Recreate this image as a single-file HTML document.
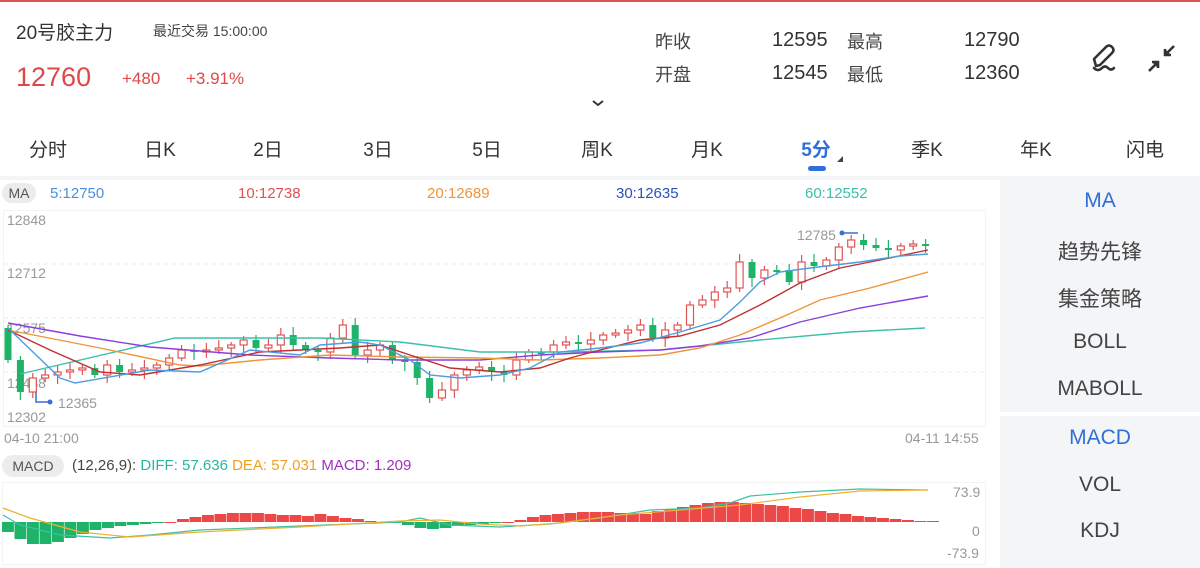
<!DOCTYPE html>
<html><head><meta charset="utf-8">
<style>
*{margin:0;padding:0;box-sizing:border-box}
body{width:1200px;height:568px;overflow:hidden;background:#fff;font-family:"Liberation Sans","Noto Sans CJK SC",sans-serif;position:relative;color:#333}
.a{position:absolute;white-space:nowrap}
.tab{position:absolute;top:135px;font-size:19px;color:#333;transform:translateX(-50%)}
.rp{position:absolute;left:1000px;width:200px;background:#f4f5f7}
.ri{position:absolute;width:200px;text-align:center;font-size:21px;color:#444;left:0}
</style></head><body>
<div class="a" style="left:0;top:0;width:1200px;height:2px;background:#d9534f"></div>
<div class="a" style="left:16px;top:18px;font-size:19px;color:#333">20号胶主力</div>
<div class="a" style="left:153px;top:21px;font-size:14px;color:#444">最近交易 15:00:00</div>
<div class="a" style="left:16px;top:62px;font-size:27px;color:#e04848">12760</div>
<div class="a" style="left:122px;top:69px;font-size:17px;color:#e04848">+480</div>
<div class="a" style="left:186px;top:69px;font-size:17px;color:#e04848">+3.91%</div>

<div class="a" style="left:655px;top:28px;font-size:18px;color:#444">昨收</div>
<div class="a" style="left:772px;top:29px;font-size:20px;color:#333">12595</div>
<div class="a" style="left:847px;top:28px;font-size:18px;color:#444">最高</div>
<div class="a" style="left:964px;top:29px;font-size:20px;color:#333">12790</div>
<div class="a" style="left:655px;top:61px;font-size:18px;color:#444">开盘</div>
<div class="a" style="left:772px;top:62px;font-size:20px;color:#333">12545</div>
<div class="a" style="left:847px;top:61px;font-size:18px;color:#444">最低</div>
<div class="a" style="left:964px;top:62px;font-size:20px;color:#333">12360</div>
<svg class="a" style="left:590px;top:98px" width="16" height="10"><path d="M3 3 L8 7 L13 3" stroke="#333" stroke-width="2" fill="none"/></svg>
<svg class="a" style="left:1088px;top:40px" width="36" height="36"><path d="M8 26 L6 19 L18 7 Q21 4 24 7 Q27 10 24 13 L12 25 Z M6 28 Q10 32 14 28 Q17 25 20 28 Q23 31 26 28" stroke="#333" stroke-width="2.6" fill="none" stroke-linejoin="round" stroke-linecap="round"/></svg>
<svg class="a" style="left:1144px;top:40px" width="36" height="36"><path d="M30 6 L21 15 M21 9 V15 H27 M5 31 L14 22 M8 22 H14 V28" stroke="#333" stroke-width="2.6" fill="none"/><path d="M21 9 L21 15 L27 15 Z M8 22 L14 22 L14 28 Z" fill="#333"/></svg>

<div class="tab" style="left:48px">分时</div>
<div class="tab" style="left:160px">日K</div>
<div class="tab" style="left:268px">2日</div>
<div class="tab" style="left:378px">3日</div>
<div class="tab" style="left:487px">5日</div>
<div class="tab" style="left:597px">周K</div>
<div class="tab" style="left:707px">月K</div>
<div class="tab" style="left:816px;color:#2f6fd8;font-weight:bold">5分</div>
<svg class="a" style="left:836px;top:155px" width="8" height="8"><path d="M7 1 L7 7 L1 7Z" fill="#444"/></svg>
<div class="a" style="left:808px;top:166px;width:18px;height:5px;border-radius:3px;background:#2f6fd8"></div>
<div class="tab" style="left:927px">季K</div>
<div class="tab" style="left:1036px">年K</div>
<div class="tab" style="left:1145px">闪电</div>
<div class="a" style="left:0;top:176px;width:1200px;height:4px;background:#f4f5f7"></div>

<div class="rp" style="top:180px;height:232px"></div>
<div class="rp" style="top:416px;height:152px"></div>
<div class="ri" style="left:1000px;top:189px;color:#2f6fd8">MA</div>
<div class="ri" style="left:1000px;top:236px">趋势先锋</div>
<div class="ri" style="left:1000px;top:283px">集金策略</div>
<div class="ri" style="left:1000px;top:330px">BOLL</div>
<div class="ri" style="left:1000px;top:377px">MABOLL</div>
<div class="ri" style="left:1000px;top:426px;color:#2f6fd8">MACD</div>
<div class="ri" style="left:1000px;top:473px">VOL</div>
<div class="ri" style="left:1000px;top:519px">KDJ</div>

<div class="a" style="left:2px;top:183px;width:34px;height:20px;border-radius:10px;background:#ececec;font-size:14px;color:#555;text-align:center;line-height:20px">MA</div>
<div class="a" style="left:50px;top:185px;font-size:15px;color:#4a8fdc">5:12750</div>
<div class="a" style="left:238px;top:185px;font-size:15px;color:#e05050">10:12738</div>
<div class="a" style="left:427px;top:185px;font-size:15px;color:#f0943a">20:12689</div>
<div class="a" style="left:616px;top:185px;font-size:15px;color:#2a52be">30:12635</div>
<div class="a" style="left:805px;top:185px;font-size:15px;color:#3cc0a8">60:12552</div>

<svg class="a" style="left:0;top:0" width="1000" height="568" id="ch">
<rect x="3.5" y="210.5" width="982" height="216" fill="none" stroke="#f3f3f3"/>
<g stroke="#eee" stroke-dasharray="4 4"><line x1="4" y1="264" x2="985" y2="264"/><line x1="4" y1="318" x2="985" y2="318"/><line x1="4" y1="372" x2="985" y2="372"/></g>
<g font-size="14" fill="#999" font-family="Liberation Sans,sans-serif">
<text x="7" y="225">12848</text><text x="7" y="278">12712</text><text x="7" y="333">12575</text><text x="7" y="388">12438</text><text x="7" y="422">12302</text>
<text x="4" y="443">04-10 21:00</text><text x="905" y="443">04-11 14:55</text>
<text x="797" y="240">12785</text><text x="58" y="408">12365</text>
<text x="953" y="497">73.9</text><text x="972" y="536">0</text><text x="947" y="558">-73.9</text>
</g>
<path d="M843 233 H858 M36 390 V402 H50" stroke="#3a6fd0" stroke-width="1.5" fill="none"/>
<circle cx="842" cy="233" r="2.5" fill="#3a6fd0"/><circle cx="50" cy="402" r="2.5" fill="#3a6fd0"/>
<g id="cd"></g>
<g fill="none" stroke-width="1.4">
<polyline stroke="#3cc0a8" points="20,374 175,338 320,338 400,342 480,352 560,352 660,350 760,340 850,332 925,328"/>
<polyline stroke="#8a3fe0" points="8,323 80,336 150,347 250,355 330,358 400,360 480,360 540,355 600,352 660,350 700,346 750,338 800,322 860,308 928,296"/>
<polyline stroke="#f0943a" points="8,330 100,348 180,365 200,366 260,360 330,355 400,357 480,358 540,360 600,358 660,355 700,348 740,335 780,318 820,300 870,288 928,272"/>
<polyline stroke="#c03030" points="8,330 50,350 100,372 140,375 200,365 260,352 300,350 340,348 380,345 410,355 450,368 500,372 540,368 570,358 600,350 640,340 680,336 720,325 760,305 800,283 840,268 880,260 928,250"/>
<polyline stroke="#4a9ee0" points="8,328 60,378 75,383 150,370 200,372 250,350 300,355 320,345 360,342 380,345 410,360 430,375 460,378 500,375 530,368 560,352 600,348 640,343 680,332 720,320 740,302 760,282 780,272 810,268 860,262 900,256 928,254"/>
</g>
<rect x="2.5" y="482.5" width="983" height="82" fill="none" stroke="#f3f3f3"/>
<g id="mh"></g>
<g fill="none" stroke-width="1.2">
<polyline stroke="#3cc0a8" points="3,515 20,525 60,535 110,538 150,535 200,530 300,526 400,522 420,518 450,525 500,527 550,524 600,518 650,510 700,508 730,503 750,496 800,492 860,489 928,490"/>
<polyline stroke="#f0b030" points="3,508 30,518 80,532 130,537 200,532 300,527 400,521 440,520 480,524 520,526 560,523 620,515 680,510 740,505 800,497 860,491 928,490"/>
</g>
</svg>
<div class="a" style="left:2px;top:455px;width:62px;height:22px;border-radius:11px;background:#ececec;font-size:14px;color:#555;text-align:center;line-height:22px">MACD</div>
<div class="a" style="left:72px;top:457px;font-size:15px;color:#444">(12,26,9): <span style="color:#2ab5a0">DIFF: 57.636</span> <span style="color:#f0a020">DEA: 57.031</span> <span style="color:#a030c0">MACD: 1.209</span></div>

<script>
var C=[360,392,378,375,372,370,368,375,365,372,370,368,365,358,350,352,350,348,345,340,348,345,335,345,350,352,338,325,355,350,345,360,362,378,398,390,375,370,367,372,375,360,352,352,345,342,344,340,335,333,330,325,338,330,325,305,300,292,288,262,278,270,270,282,262,266,260,247,240,245,248,250,246,244,244];
var s='',o=328;
for(var i=0;i<C.length;i++){var x=8+i*12.4,c=C[i],up=c<o,t=Math.min(o,c),b=Math.max(o,c),h=b-t;if(h<2)h=2;
var hi=t-3-(i*7%6),lo=b+3+(i*5%7),col=up?'#e05555':'#1fb36a';
s+='<line x1="'+x+'" y1="'+hi+'" x2="'+x+'" y2="'+lo+'" stroke="'+col+'" stroke-width="1.2"/>';
s+='<rect x="'+(x-3.5)+'" y="'+t+'" width="7" height="'+h+'" '+(up?'fill="#fff" stroke="'+col+'" stroke-width="1.2"':'fill="'+col+'"')+'/>';o=c;}
document.getElementById('cd').innerHTML=s;
var H=[-10,-17,-22,-22,-20,-16,-12,-8,-6,-4,-3,-2,-1,0,3,5,7,8,9,9,9,8,7,7,6,8,6,4,3,1,0,-1,-3,-6,-7,-6,-4,-3,-2,-1,0,2,5,7,8,9,10,10,10,9,9,8,11,13,15,17,19,20,20,19,18,17,16,14,13,11,9,8,6,5,4,3,2,1,1];
var m='',z=522,w=12.5;
for(var j=0;j<H.length;j++){var x=2+j*w,v=H[j];m+='<rect x="'+x+'" y="'+(v>0?z-v:z)+'" width="'+(w-0.6)+'" height="'+Math.max(Math.abs(v),1)+'" fill="'+(v>=0?'#ec4848':'#1fb36a')+'"/>';}
document.getElementById('mh').innerHTML=m;
</script>
</body></html>
